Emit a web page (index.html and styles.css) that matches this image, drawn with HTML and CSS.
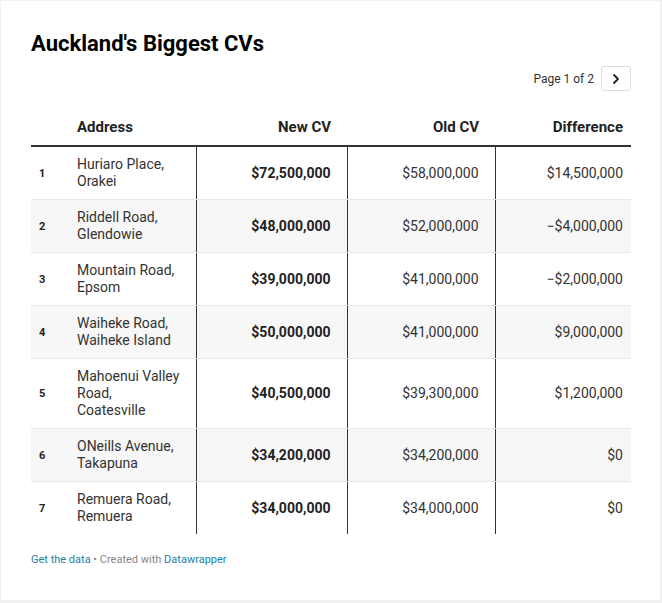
FILE: index.html
```html
<!DOCTYPE html>
<html>
<head>
<meta charset="utf-8">
<link rel="stylesheet" href="styles.css">
</head>
<body>
<div class="card">
  <h1 class="title">Auckland's Biggest CVs</h1>
  <div class="pager">
    <span class="pager-text">Page 1 of 2</span>
    <button class="pager-btn" aria-label="Next page">
      <svg width="10" height="12" viewBox="0 0 10 12"><path d="M3 2 L7 6 L3 10" fill="none" stroke="#222" stroke-width="1.8" stroke-linecap="round" stroke-linejoin="round"/></svg>
    </button>
  </div>
  <table class="cv-table">
    <colgroup>
      <col class="c-rank"><col class="c-addr"><col class="c-new"><col class="c-old"><col class="c-diff">
    </colgroup>
    <thead>
      <tr>
        <th class="rank-h"></th>
        <th class="addr">Address</th>
        <th class="num">New CV</th>
        <th class="num">Old CV</th>
        <th class="num last">Difference</th>
      </tr>
    </thead>
    <tbody>
      <tr><td class="rank">1</td><td class="addr">Huriaro Place, Orakei</td><td class="num strong">$72,500,000</td><td class="num">$58,000,000</td><td class="num last">$14,500,000</td></tr>
      <tr><td class="rank">2</td><td class="addr">Riddell Road, Glendowie</td><td class="num strong">$48,000,000</td><td class="num">$52,000,000</td><td class="num last">−$4,000,000</td></tr>
      <tr><td class="rank">3</td><td class="addr">Mountain Road, Epsom</td><td class="num strong">$39,000,000</td><td class="num">$41,000,000</td><td class="num last">−$2,000,000</td></tr>
      <tr><td class="rank">4</td><td class="addr">Waiheke Road, Waiheke Island</td><td class="num strong">$50,000,000</td><td class="num">$41,000,000</td><td class="num last">$9,000,000</td></tr>
      <tr><td class="rank">5</td><td class="addr">Mahoenui Valley Road, Coatesville</td><td class="num strong">$40,500,000</td><td class="num">$39,300,000</td><td class="num last">$1,200,000</td></tr>
      <tr><td class="rank">6</td><td class="addr">ONeills Avenue, Takapuna</td><td class="num strong">$34,200,000</td><td class="num">$34,200,000</td><td class="num last">$0</td></tr>
      <tr><td class="rank">7</td><td class="addr">Remuera Road, Remuera</td><td class="num strong">$34,000,000</td><td class="num">$34,000,000</td><td class="num last">$0</td></tr>
    </tbody>
  </table>
  <div class="footer">
    <a class="link" href="#">Get the data</a><span class="sep"> • </span><span class="muted">Created with </span><a class="link" href="#">Datawrapper</a>
  </div>
</div>
</body>
</html>
```

FILE: styles.css
```css
html, body {
  margin: 0;
  padding: 0;
}
body {
  background: #f1f1f1;
  padding: 1px 2px 3px 1px;
  font-family: Roboto, "Liberation Sans", sans-serif;
  color: #333;
}
.card {
  background: #fff;
  width: 599px;
  height: 599px;
  padding: 0 30px 0 30px;
  box-sizing: content-box;
  overflow: hidden;
}
.title {
  margin: 0;
  padding-top: 30px;
  font-size: 22px;
  line-height: 26px;
  font-weight: 700;
  color: #000;
}
.pager {
  display: flex;
  justify-content: flex-end;
  align-items: center;
  gap: 7px;
  margin-top: 9px;
  width: 600px;
}
.pager-text {
  font-size: 12px;
  color: #333;
}
.pager-btn {
  width: 30px;
  height: 25px;
  border: 1px solid #dcdcdc;
  border-radius: 3px;
  background: #fff;
  padding: 0;
  display: flex;
  align-items: center;
  justify-content: center;
}
.cv-table {
  width: 600px;
  border-collapse: collapse;
  table-layout: fixed;
  margin-top: 17px;
  font-size: 14px;
}
.c-rank { width: 38px; }
.c-addr { width: 127px; }
.c-new { width: 151px; }
.c-old { width: 148px; }
.c-diff { width: 136px; }
th {
  font-weight: 700;
  color: #222;
  font-size: 15px;
  line-height: 17px;
  padding: 11px 16px 9px 8px;
  border-bottom: 2px solid #333;
  text-align: left;
  vertical-align: bottom;
}
td {
  line-height: 17px;
  padding: 9px 16px 9px 8px;
  border-bottom: 1px solid #e8e8e8;
  vertical-align: middle;
  color: #333;
}
tbody tr:nth-child(even) td {
  background: #f7f7f7;
}
tbody tr:last-child td {
  border-bottom: none;
}
.rank {
  font-size: 11px;
  font-weight: 700;
  color: #222;
}
.num {
  text-align: right;
}
th.num {
  text-align: right;
}
td.num {
  border-left: 1px solid #333;
}
.last {
  padding-right: 8px;
}
.strong {
  font-weight: 700;
  color: #222;
}
.footer {
  margin-top: 19px;
  font-size: 11px;
  line-height: 14px;
}
.link {
  color: #1d81a2;
  text-decoration: none;
}
.sep, .muted {
  color: #888;
}
```
